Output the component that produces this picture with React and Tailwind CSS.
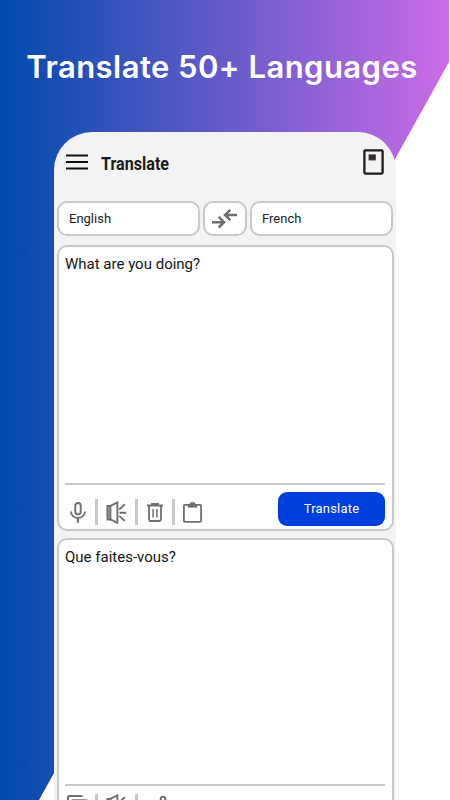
import React from 'react';

const MenuIcon = () => (
  <svg width="22" height="16" viewBox="0 0 22 16" stroke="#111" strokeWidth="1.8">
    <path d="M0 1.5h22M0 8h22M0 14.5h22" />
  </svg>
);

const BookIcon = () => (
  <svg width="21" height="26" viewBox="0 0 21 26">
    <rect x="1.4" y="1.4" width="18.2" height="23.2" rx="1" fill="none" stroke="#1f1a1b" strokeWidth="2.3" />
    <rect x="5.6" y="5.4" width="7.2" height="6" fill="#332d2e" />
  </svg>
);

const SwapIcon = () => (
  <svg width="25" height="20" viewBox="0 0 25 20" fill="none" stroke="#716f6b" strokeWidth="2.5">
    <path d="M0 13.2h11.5M6.7 7.9l5.3 5.3-5.3 5.3" />
    <path d="M25 6H13.5M18.3.9L13 6l5.3 5.2" />
  </svg>
);

const MicIcon = () => (
  <svg width="16" height="21" viewBox="0 0 16 21" fill="none" stroke="#716f6b" strokeWidth="1.9">
    <rect x="5.3" y="1" width="5.4" height="11.4" rx="2.7" />
    <path d="M1 9.4c0 3.8 3 6.5 7 6.5s7-2.7 7-6.5" />
    <path d="M8 15.8v5" strokeWidth="2.2" />
  </svg>
);

const SpeakerIcon = () => (
  <svg width="21" height="23" viewBox="0 0 21 23" fill="none" stroke="#716f6b" strokeWidth="1.9">
    <path d="M1.4 4.9h3v13.6h-3z" fill="#aaa8a4" />
    <path d="M4.4 4.9l7-3.5v20.4l-7-3.4" />
    <path d="M13.5 11.7h6.7M13.2 8.6l5.6-5.4M13.2 14.9l5.6 5" />
  </svg>
);

const TrashIcon = () => (
  <svg width="16" height="19" viewBox="0 0 16 19" fill="none" stroke="#716f6b" strokeWidth="1.8">
    <path d="M0 2.5h16M5 2V0.9h6V2" />
    <path d="M2 2.8v13.7q0 1.5 1.5 1.5h9q1.5 0 1.5-1.5V2.8" />
    <path d="M6.1 6v8.5M9.9 6v8.5" strokeWidth="1.5" />
  </svg>
);

const ClipboardIcon = () => (
  <svg width="19" height="21" viewBox="0 0 19 21" fill="none" stroke="#716f6b" strokeWidth="1.8">
    <rect x="0.9" y="2.8" width="17.2" height="17" rx="1" />
    <path d="M4.8 2.6h9.4v3H4.8z" fill="#716f6b" stroke="none" />
    <path d="M7.2 3.2c0-3 4.6-3 4.6 0" />
  </svg>
);

const CopyIcon = () => (
  <svg width="21" height="21" viewBox="0 0 21 21" fill="none" stroke="#716f6b" strokeWidth="2">
    <path d="M1 14.5V2q0-1 1-1h13.5" />
    <rect x="5" y="5.3" width="15" height="14.5" rx="1" />
  </svg>
);

const ShareIcon = () => (
  <svg width="18" height="21" viewBox="0 0 18 21" fill="none" stroke="#716f6b" strokeWidth="2">
    <circle cx="14" cy="3" r="2.3" />
    <circle cx="4" cy="10" r="2.3" />
    <circle cx="14" cy="17" r="2.3" />
    <path d="M12 4.5L6 8.6M6 11.4l6 4.2" />
  </svg>
);

const Separator = () => <div className="w-[3px] h-[26px] bg-[#c8c8c8] shrink-0" />;

const LanguageBox = ({ name }) => (
  <button className="w-[143px] h-[35px] pl-[10.5px] text-left text-[13px] text-[#222] bg-white border-2 border-[#c8c8c8] rounded-[10px]">
    {name}
  </button>
);

const Panel = ({ text, className, children }) => (
  <div className={`w-[337px] px-[6.5px] bg-white border-2 border-[#c8c8c8] rounded-[10px] flex flex-col shrink-0 ${className}`}>
    <div className="grow pt-[7px] text-[15px] leading-[21px] text-[#151515]">{text}</div>
    <div className="h-[46px] border-t-2 border-[#c8c8c8] flex items-start shrink-0">{children}</div>
  </div>
);

const App = () => {
  return (
    <div className="relative w-[450px] h-[800px] overflow-hidden bg-white font-[Roboto,sans-serif]">
      <div className="absolute inset-y-0 left-0 w-[449px] bg-[linear-gradient(90deg,#004aad,#cb6ce6)] [clip-path:polygon(0_0,449px_0,449px_62px,39px_800px,0_800px)]" />

      <div className="relative h-full flex flex-col">
        <h1 className="h-[132px] pt-[47px] shrink-0 text-center text-white font-[Inter,sans-serif] font-semibold text-[31px] leading-[40px] tracking-[0.45px] whitespace-nowrap pr-[6px]">
          Translate 50+ Languages
        </h1>

        <div className="ml-[54px] w-[342px] grow min-h-0 overflow-hidden rounded-t-[38px] bg-[#f3f3f3]">
          <header className="h-[69px] pt-[17px] pl-[12px] pr-[12px] flex items-start justify-between">
            <div className="flex items-start">
              <div className="pt-[5px]"><MenuIcon /></div>
              <span className="ml-[12.5px] pt-[1px] text-[18px] leading-[28px] font-bold text-[#1b1b1b] origin-left scale-x-[0.895]">Translate</span>
            </div>
            <BookIcon />
          </header>

          <div className="ml-[2.5px] flex gap-[3px]">
            <LanguageBox name="English" />
            <button className="w-[44px] h-[35px] flex items-center justify-center bg-white border-2 border-[#c8c8c8] rounded-[10px]">
              <SwapIcon />
            </button>
            <LanguageBox name="French" />
          </div>

          <div className="mt-[8.5px] ml-[2.5px] flex flex-col gap-[6.5px]">
            <Panel text="What are you doing?" className="h-[286.5px]">
              <div className="flex items-center pl-[5px] pt-[14px]">
                <MicIcon />
                <div className="ml-[9px]"><Separator /></div>
                <div className="ml-[8px]"><SpeakerIcon /></div>
                <div className="ml-[8px]"><Separator /></div>
                <div className="ml-[8.5px]"><TrashIcon /></div>
                <div className="ml-[9.5px]"><Separator /></div>
                <div className="ml-[7.5px]"><ClipboardIcon /></div>
              </div>
              <button className="ml-auto mt-[7px] w-[107px] h-[34px] rounded-[9px] bg-[#003fdd] text-[13px] tracking-[0.2px] text-white">
                Translate
              </button>
            </Panel>

            <Panel text="Que faites-vous?" className="h-[294px]">
              <div className="flex items-start pl-[2px] pt-[8px]">
                <div className="pt-px"><CopyIcon /></div>
                <div className="ml-[7px]"><Separator /></div>
                <div className="ml-[8px]"><SpeakerIcon /></div>
                <div className="ml-[8px]"><Separator /></div>
                <div className="ml-[11px] pt-[2px]"><ShareIcon /></div>
              </div>
            </Panel>
          </div>
        </div>
      </div>
    </div>
  );
};

export default App;
